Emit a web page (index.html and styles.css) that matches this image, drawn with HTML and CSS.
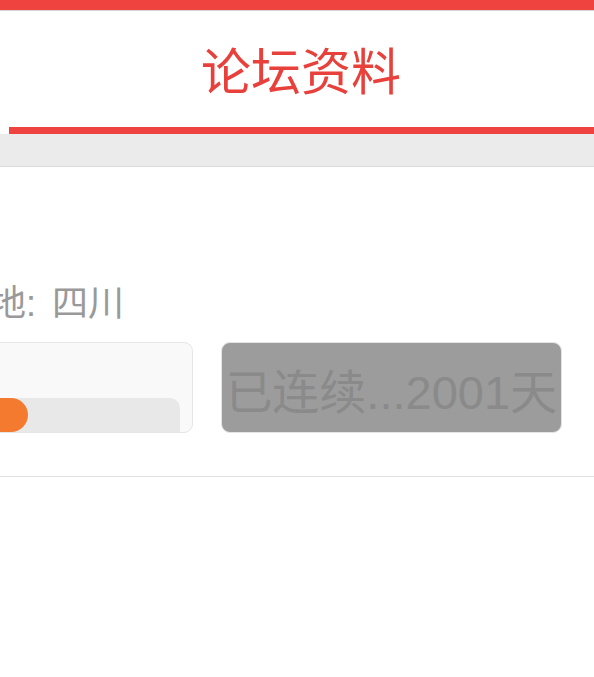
FILE: index.html
```html
<!DOCTYPE html>
<html lang="zh-CN">
<head>
    <meta charset="UTF-8">
    <meta name="viewport" content="width=device-width, initial-scale=1.0">
    <title>论坛资料</title>
    <link rel="stylesheet" href="styles.css">
</head>
<body>
    <div class="topbar"></div>

    <header class="header">
        <h1 class="header-title">论坛资料</h1>
        <div class="tab-line"></div>
    </header>

    <div class="band"></div>

    <section class="profile">
        <p class="location">所在地: 四川</p>
        <div class="stats">
            <div class="level-box">
                <div class="level-bar">
                    <div class="level-fill" style="width: 52%"></div>
                </div>
            </div>
            <div class="sign-box">已连续...2001天</div>
        </div>
    </section>
</body>
</html>
```

FILE: styles.css
```css
:root {
    --red: #ee433f;
    --title-red: #e8413c;
    --gray-text: #999;
    --line: #dcdcdc;
    --font-base: "Liberation Sans", "Noto Sans CJK SC", sans-serif;
}

* {
    margin: 0;
    padding: 0;
    box-sizing: border-box;
}

body {
    font-family: var(--font-base);
    background: #fff;
    overflow: hidden;
}

.topbar {
    height: 11px;
    background: var(--red);
    border-bottom: 1px solid #d6d6d6;
}

.header {
    background: #fff;
}

.header-title {
    height: 116px;
    display: flex;
    align-items: center;
    justify-content: center;
    padding-left: 8px;
    padding-bottom: 2px;
    font-size: 50px;
    font-weight: 400;
    color: var(--title-red);
}

.tab-line {
    height: 7px;
    margin-left: 9px;
    background: var(--red);
}

.band {
    height: 33px;
    background: #ebebeb;
    border-bottom: 1px solid var(--line);
}

.profile {
    margin-left: -181px;
    padding: 116px 32px 43px;
    border-bottom: 1px solid #e0e0e0;
}

.location {
    padding-left: 67px;
    font-size: 36px;
    line-height: 42px;
    word-spacing: 6px;
    color: var(--gray-text);
}

.stats {
    display: grid;
    grid-template-columns: 1fr 1fr;
    gap: 28px;
    margin-top: 17px;
}

.level-box {
    height: 91px;
    display: flex;
    align-items: flex-end;
    padding-right: 12px;
    padding-left: 12px;
    background: #f9f9f9;
    border: 1px solid #e6e6e6;
    border-radius: 9px;
    overflow: hidden;
}

.level-bar {
    width: 100%;
    height: 34px;
    background: #e8e8e8;
    border-radius: 0 10px 0 0;
    overflow: hidden;
}

.level-fill {
    height: 100%;
    background: #f47a30;
    border-radius: 0 17px 17px 0;
}

.sign-box {
    height: 91px;
    display: flex;
    align-items: center;
    justify-content: center;
    padding-top: 2px;
    background: #9c9c9c;
    border: 1px solid #e4e4e4;
    border-radius: 9px;
    font-size: 47px;
    color: #8a8a8a;
    white-space: nowrap;
    overflow: hidden;
}
```
